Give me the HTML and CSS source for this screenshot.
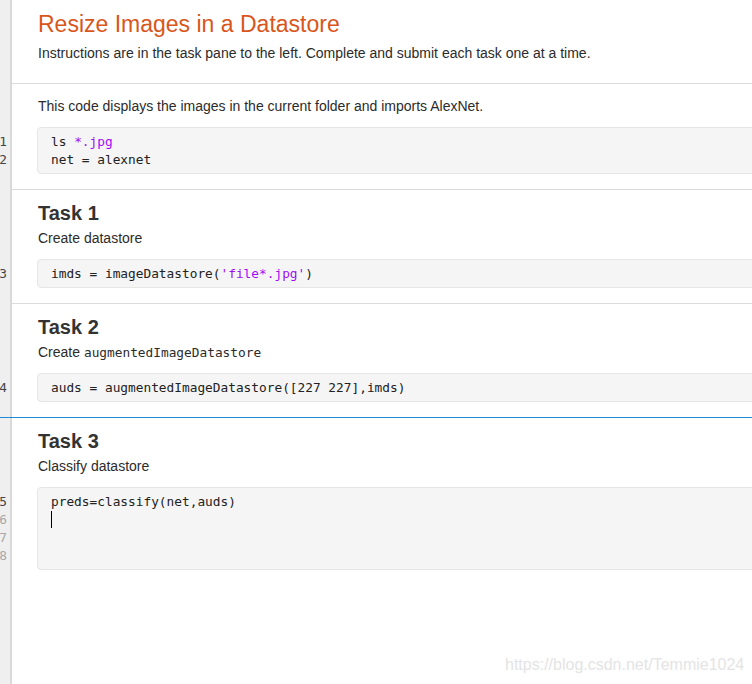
FILE: index.html
```html
<!DOCTYPE html>
<html lang="en">
<head>
<meta charset="utf-8">
<title>Resize Images in a Datastore</title>
<link rel="stylesheet" href="styles.css">
</head>
<body>
<main class="page">
  <section class="cell intro">
    <h1 class="title">Resize Images in a Datastore</h1>
    <p class="lead">Instructions are in the task pane to the left. Complete and submit each task one at a time.</p>
    <div class="sep"></div>
  </section>

  <section class="cell first">
    <p class="text">This code displays the images in the current folder and imports AlexNet.</p>
    <div class="nums"><span>1</span><span>2</span></div>
    <div class="code">
      <span class="line">ls <span class="str">*.jpg</span></span>
      <span class="line">net = alexnet</span>
    </div>
    <div class="sep"></div>
  </section>

  <section class="cell">
    <h2 class="task">Task 1</h2>
    <p class="text">Create datastore</p>
    <div class="nums"><span>3</span></div>
    <div class="code">
      <span class="line">imds = imageDatastore(<span class="str">'file*.jpg'</span>)</span>
    </div>
    <div class="sep"></div>
  </section>

  <section class="cell">
    <h2 class="task">Task 2</h2>
    <p class="text">Create <code class="inline">augmentedImageDatastore</code></p>
    <div class="nums"><span>4</span></div>
    <div class="code">
      <span class="line">auds = augmentedImageDatastore([227 227],imds)</span>
    </div>
    <div class="sep blue"></div>
  </section>

  <section class="cell last">
    <h2 class="task">Task 3</h2>
    <p class="text">Classify datastore</p>
    <div class="nums"><span>5</span><span class="dim">6</span><span class="dim">7</span><span class="dim">8</span></div>
    <div class="code">
      <span class="line">preds=classify(net,auds)</span>
      <span class="line"><span class="caret"></span></span>
      <span class="line"></span>
      <span class="line"></span>
    </div>
  </section>

  <div class="watermark">https://blog.csdn.net/Temmie1024</div>
</main>
</body>
</html>
```

FILE: styles.css
```css
html, body {
  margin: 0;
  padding: 0;
  background: #ffffff;
}

body {
  width: 752px;
  height: 684px;
  overflow: hidden;
  font-family: "Liberation Sans", Arial, sans-serif;
  font-size: 14px;
  line-height: 18px;
  color: #2b2b2b;
}

.page {
  position: relative;
  display: flex;
  flex-direction: column;
  min-height: 684px;
  background: linear-gradient(to right, #efefef 0, #efefef 10px, #dddddd 10px, #d4d4d4 12px, #ffffff 12px);
}

.cell {
  display: grid;
  grid-template-columns: 12px 25px 1fr;
  align-content: start;
  padding-top: 11px;
}

.cell > * {
  grid-column: 3;
}

.cell.intro {
  padding-top: 10px;
}

.cell.last {
  flex: 1;
}

.title {
  margin: 0 0 6px 1px;
  font-size: 23px;
  line-height: 28px;
  font-weight: normal;
  color: #d9561b;
}

.lead {
  margin: 0 0 21px 1px;
}

.text {
  height: 18px;
  margin: 0 0 12px 1px;
}

.cell.first .text {
  margin-top: 2px;
}

.task {
  margin: 0 0 4px 1px;
  font-size: 20px;
  line-height: 24px;
  font-weight: bold;
  color: #333333;
}

.inline {
  font-family: "DejaVu Sans Mono", monospace;
  font-size: 12.8px;
  line-height: 1;
}

.nums {
  grid-column: 1;
  direction: rtl;
  overflow: hidden;
  padding: 6px 5px 0 0;
  display: flex;
  flex-direction: column;
  font-family: "DejaVu Sans Mono", monospace;
  font-size: 12.8px;
  line-height: 18px;
  color: #444444;
}

.nums .dim {
  color: #a8a8a8;
}

.code {
  display: flex;
  flex-direction: column;
  margin: 0 -30px 15px 0;
  padding: 5px 13px 4px 13px;
  background: #f5f5f5;
  border: 1px solid #e6e6e6;
  border-radius: 4px;
  font-family: "DejaVu Sans Mono", monospace;
  font-size: 12.8px;
  line-height: 18px;
  color: #222222;
}

.line {
  display: block;
  height: 18px;
  white-space: pre;
}

.str {
  color: #a20cf5;
}

.caret {
  display: inline-block;
  width: 1px;
  height: 17px;
  background: #000000;
  vertical-align: top;
}

.sep {
  grid-column: 2 / -1;
  height: 1px;
  background: #dcdcdc;
}

.sep.blue {
  grid-column: 1 / -1;
  background: #1e88d9;
}

.watermark {
  position: absolute;
  left: 505px;
  top: 655px;
  font-family: "Liberation Sans", Arial, sans-serif;
  font-size: 16px;
  line-height: 20px;
  color: #e4e4e4;
  white-space: nowrap;
}
```
